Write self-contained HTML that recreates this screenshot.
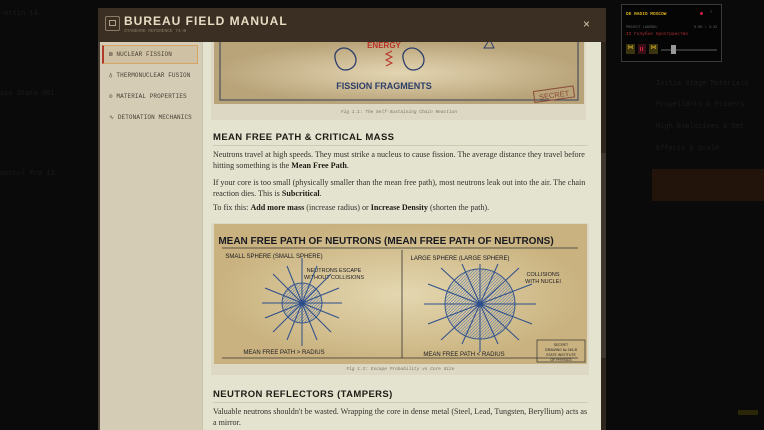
<!DOCTYPE html>
<html><head><meta charset="utf-8"><style>
*{margin:0;padding:0;box-sizing:border-box}
body{width:764px;height:430px;overflow:hidden;background:#0a0a0a;position:relative;font-family:"Liberation Serif",serif}
.a{position:absolute;white-space:nowrap}
.bg{color:#1c1c1b;font:7px "Liberation Mono",monospace}
.hdr{left:98px;top:8px;width:508px;height:34px;background:#3a2f22}
.side{left:98px;top:42px;width:104px;height:388px;background:#d5ccb6;border-left:2px solid #4a4035}
.cont{left:202px;top:42px;width:399px;height:388px;background:#e4e3cf;border-left:1px solid #c9c2ab}
.sb{left:601px;top:42px;width:5px;height:388px;background:#2e261d}
.nav{font:6px "Liberation Mono",monospace;color:#4a4035;letter-spacing:.1px}
h3{position:absolute;font:bold 9.5px "Liberation Sans",sans-serif;letter-spacing:.4px;color:#1f1a14;white-space:nowrap}
p{position:absolute;font-size:8.1px;line-height:11px;color:#33302a;width:378px}
b{color:#1f1a14}
.cap{position:absolute;font:italic 4.5px "Liberation Mono",monospace;color:#7a7468;text-align:center}
</style></head><body>
<div class="a bg" style="left:0;top:10px">·ettin 14</div>
<div class="a bg" style="left:0;top:90px">ain State 001</div>
<div class="a bg" style="left:0;top:170px">ontrol Pro 13</div>
<div class="a bg" style="left:656px;top:80px">Initia Stage Materials</div>
<div class="a bg" style="left:656px;top:101px">Propellants &amp; Primers</div>
<div class="a bg" style="left:656px;top:123px">High Explosives &amp; Det</div>
<div class="a bg" style="left:656px;top:145px">Effects &amp; Scale</div>
<div class="a" style="left:652px;top:169px;width:112px;height:32px;background:#22140a"></div>
<div class="a" style="left:738px;top:410px;width:20px;height:5px;background:#2a2608"></div>

<div class="a hdr"></div>
<div class="a" style="left:105px;top:16px;width:15px;height:15px;border:1.5px solid #8a7c66;border-radius:2px"></div>
<div class="a" style="left:109px;top:20px;width:7px;height:6px;border:1px solid #b0a288"></div>
<div class="a" style="left:124px;top:14px;font:bold 12px 'Liberation Sans',sans-serif;letter-spacing:1px;color:#e8dcc4">BUREAU FIELD MANUAL</div>
<div class="a" style="left:124px;top:29px;font:4.5px 'Liberation Mono',monospace;color:#8a7c66">STANDARD REFERENCE 74-B</div>
<div class="a" style="left:583px;top:17px;font:12px 'Liberation Sans',sans-serif;color:#d8ccb4">×</div>

<div class="a side"></div>
<div class="a" style="left:102px;top:45px;width:96px;height:19px;background:#cfc2a4;border:1px solid #d7a463;border-left:2px solid #b03a2a"></div>
<div class="a nav" style="left:109px;top:51px">⊠ NUCLEAR FISSION</div>
<div class="a nav" style="left:109px;top:72px">♁ THERMONUCLEAR FUSION</div>
<div class="a nav" style="left:109px;top:93px">⊙ MATERIAL PROPERTIES</div>
<div class="a nav" style="left:109px;top:114px">∿ DETONATION MECHANICS</div>

<div class="a cont"></div>
<div class="a sb"></div>
<div class="a" style="left:601px;top:153px;width:5px;height:205px;background:#3f382f"></div>

<div class="a" style="left:211px;top:42px;width:375px;height:78px;background:#dcd8c4"></div>
<svg class="a" style="left:214px;top:42px" width="370" height="62">
<defs><radialGradient id="g1"><stop offset="0" stop-color="#e3d5b2"/><stop offset="1" stop-color="#b9a47a"/></radialGradient></defs>
<rect width="370" height="62" fill="url(#g1)"/>
<path d="M6 0V58H364V0" fill="none" stroke="#34405a" stroke-width="1"/>
<path d="M130 6c-5 0-10 4-9 10s4 12 10 12 11-4 11-10-6-12-12-12z" fill="none" stroke="#2c3e6a" stroke-width="1.3"/>
<path d="M198 6c-5 0-10 4-9 10s4 12 10 12 11-4 11-10-6-12-12-12z" fill="none" stroke="#2c3e6a" stroke-width="1.3"/>
<text x="170" y="6" font-family="Liberation Sans" font-weight="bold" font-size="8" fill="#b8322a" text-anchor="middle">ENERGY</text>
<path d="M178 9l-6 3 6 3-6 3 6 3-6 3" fill="none" stroke="#b8322a"/>
<path d="M274 0l-4 6h10l-3-6" fill="none" stroke="#2c3e6a"/>
<text x="170" y="47" font-family="Liberation Sans" font-weight="bold" font-size="9" fill="#2c3e6a" text-anchor="middle">FISSION FRAGMENTS</text>
<g transform="rotate(-8 345 52)"><rect x="320" y="46" width="40" height="11" fill="none" stroke="#8a4a3a"/><text x="340" y="55" font-family="Liberation Sans" font-size="7.5" fill="#8a4a3a" text-anchor="middle">SECRET</text></g>
</svg>
<div class="cap" style="left:214px;top:110px;width:370px">Fig 1.1: The Self-Sustaining Chain Reaction</div>

<h3 style="left:213px;top:132px">MEAN FREE PATH &amp; CRITICAL MASS</h3>
<div class="a" style="left:213px;top:145px;width:375px;height:1px;background:#d0cbb6"></div>
<p style="left:213px;top:149px">Neutrons travel at high speeds. They must strike a nucleus to cause fission. The average distance they travel before hitting something is the <b>Mean Free Path</b>.</p>
<p style="left:213px;top:177px">If your core is too small (physically smaller than the mean free path), most neutrons leak out into the air. The chain reaction dies. This is <b>Subcritical</b>.</p>
<p style="left:213px;top:202px">To fix this: <b>Add more mass</b> (increase radius) or <b>Increase Density</b> (shorten the path).</p>

<div class="a" style="left:211px;top:223px;width:378px;height:152px;background:#dcd8c4"></div>
<svg class="a" style="left:214px;top:224px" width="373" height="140">
<defs><radialGradient id="g2"><stop offset="0" stop-color="#e4d7b0"/><stop offset="1" stop-color="#c9b27f"/></radialGradient>
<pattern id="h" width="3" height="3" patternUnits="userSpaceOnUse"><path d="M0 3L3 0" stroke="#5a78a8" stroke-width=".6"/></pattern></defs>
<rect width="373" height="140" fill="url(#g2)"/>
<text x="172" y="20" font-family="Liberation Sans" font-weight="bold" font-size="10" fill="#1a1a22" text-anchor="middle">MEAN FREE PATH OF NEUTRONS (MEAN FREE PATH OF NEUTRONS)</text>
<path d="M8 24H364M188 26V134M8 134H364" stroke="#333" stroke-width=".8" fill="none"/>
<text x="60" y="34" font-family="Liberation Sans" font-size="6" fill="#1a1a22" text-anchor="middle">SMALL SPHERE (SMALL SPHERE)</text>
<text x="120" y="48" font-family="Liberation Sans" font-size="5.5" fill="#1a1a22" text-anchor="middle">NEUTRONS ESCAPE</text>
<text x="120" y="55" font-family="Liberation Sans" font-size="5.5" fill="#1a1a22" text-anchor="middle">WITHOUT COLLISIONS</text>
<circle cx="88" cy="79" r="20" fill="url(#h)" stroke="#3a5a90"/>
<g stroke="#2c4e8c" stroke-width="1">
<line x1="88" y1="79" x2="128" y2="79"/><line x1="88" y1="79" x2="48" y2="79"/><line x1="88" y1="79" x2="88" y2="34"/><line x1="88" y1="79" x2="88" y2="122"/>
<line x1="88" y1="79" x2="125" y2="64"/><line x1="88" y1="79" x2="51" y2="94"/><line x1="88" y1="79" x2="51" y2="64"/><line x1="88" y1="79" x2="125" y2="94"/>
<line x1="88" y1="79" x2="117" y2="50"/><line x1="88" y1="79" x2="59" y2="108"/><line x1="88" y1="79" x2="59" y2="50"/><line x1="88" y1="79" x2="117" y2="108"/>
<line x1="88" y1="79" x2="103" y2="42"/><line x1="88" y1="79" x2="73" y2="116"/><line x1="88" y1="79" x2="73" y2="42"/><line x1="88" y1="79" x2="103" y2="116"/>
</g>
<text x="70" y="130" font-family="Liberation Sans" font-size="6" fill="#1a1a22" text-anchor="middle">MEAN FREE PATH &gt; RADIUS</text>
<text x="246" y="36" font-family="Liberation Sans" font-size="6" fill="#1a1a22" text-anchor="middle">LARGE SPHERE (LARGE SPHERE)</text>
<text x="329" y="52" font-family="Liberation Sans" font-size="5.5" fill="#1a1a22" text-anchor="middle">COLLISIONS</text>
<text x="329" y="59" font-family="Liberation Sans" font-size="5.5" fill="#1a1a22" text-anchor="middle">WITH NUCLEI</text>
<circle cx="266" cy="80" r="35" fill="url(#h)" stroke="#3a5a90"/>
<g stroke="#2c4e8c" stroke-width="1">
<line x1="266" y1="80" x2="322" y2="80"/><line x1="266" y1="80" x2="210" y2="80"/><line x1="266" y1="80" x2="266" y2="40"/><line x1="266" y1="80" x2="266" y2="128"/>
<line x1="266" y1="80" x2="318" y2="60"/><line x1="266" y1="80" x2="214" y2="100"/><line x1="266" y1="80" x2="214" y2="60"/><line x1="266" y1="80" x2="318" y2="100"/>
<line x1="266" y1="80" x2="305" y2="44"/><line x1="266" y1="80" x2="227" y2="116"/><line x1="266" y1="80" x2="227" y2="44"/><line x1="266" y1="80" x2="305" y2="116"/>
<line x1="266" y1="80" x2="284" y2="40"/><line x1="266" y1="80" x2="248" y2="120"/><line x1="266" y1="80" x2="248" y2="40"/><line x1="266" y1="80" x2="284" y2="120"/>
</g>
<text x="250" y="132" font-family="Liberation Sans" font-size="6" fill="#1a1a22" text-anchor="middle">MEAN FREE PATH &lt; RADIUS</text>
<rect x="323" y="116" width="48" height="22" fill="none" stroke="#333" stroke-width=".7"/>
<text x="347" y="122" font-family="Liberation Sans" font-size="3.5" fill="#222" text-anchor="middle">SECRET</text>
<text x="347" y="127" font-family="Liberation Sans" font-size="3.5" fill="#222" text-anchor="middle">DRAWING № 246-B</text>
<text x="347" y="132" font-family="Liberation Sans" font-size="3.5" fill="#222" text-anchor="middle">STATE INSTITUTE</text>
<text x="347" y="137" font-family="Liberation Sans" font-size="3.5" fill="#222" text-anchor="middle">OF PHYSICS</text>
</svg>
<div class="cap" style="left:214px;top:367px;width:373px">Fig 1.2: Escape Probability vs Core Size</div>

<h3 style="left:213px;top:389px">NEUTRON REFLECTORS (TAMPERS)</h3>
<div class="a" style="left:213px;top:402px;width:375px;height:1px;background:#d0cbb6"></div>
<p style="left:213px;top:406px">Valuable neutrons shouldn't be wasted. Wrapping the core in dense metal (Steel, Lead, Tungsten, Beryllium) acts as a mirror.</p>

<div class="a" style="left:621px;top:4px;width:101px;height:58px;background:#050505;border:1px solid #3a3a3a"></div>
<div class="a" style="left:626px;top:12px;font:bold 4.5px 'Liberation Mono',monospace;color:#d8b020">DE RADIO MOSCOW</div>
<div class="a" style="left:700px;top:12px;width:3px;height:3px;border-radius:50%;background:#d02040"></div>
<div class="a" style="left:710px;top:11px;font:4px 'Liberation Mono',monospace;color:#555">≡</div>
<div class="a" style="left:626px;top:26px;font:3.5px 'Liberation Mono',monospace;color:#666">PROJECT LAKEBOL</div>
<div class="a" style="left:694px;top:26px;font:3.5px 'Liberation Mono',monospace;color:#666">0:00 / 3:33</div>
<div class="a" style="left:626px;top:32px;font:4.5px 'Liberation Mono',monospace;color:#b03030">II Голубое пространство</div>
<div class="a" style="left:626px;top:44px;width:9px;height:10px;background:#3a3410;color:#d8b020;font:6px sans-serif;text-align:center">⋈</div>
<div class="a" style="left:638px;top:44px;width:8px;height:10px;background:#3a1018"></div>
<div class="a" style="left:640px;top:47px;width:3px;height:4px;border-left:1px solid #d02040;border-right:1px solid #d02040"></div>
<div class="a" style="left:649px;top:44px;width:9px;height:10px;background:#3a3410;color:#d8b020;font:6px sans-serif;text-align:center">⋈</div>
<div class="a" style="left:661px;top:49px;width:56px;height:2px;background:#333"></div>
<div class="a" style="left:671px;top:45px;width:5px;height:9px;background:#999"></div>
</body></html>
